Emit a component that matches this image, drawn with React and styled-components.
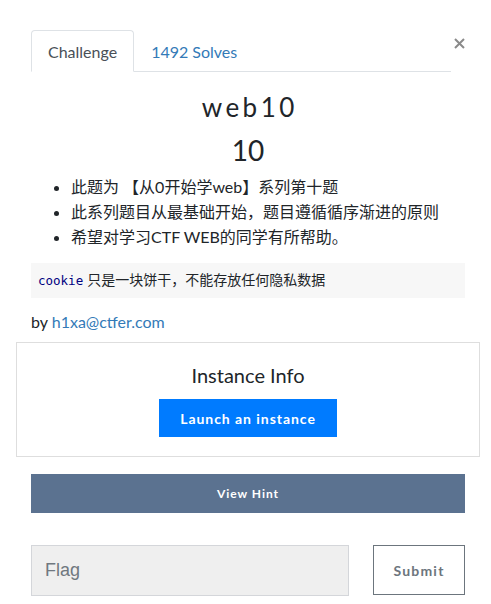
import React from 'react';
import styled, { createGlobalStyle } from 'styled-components';

const GlobalStyle = createGlobalStyle`
  html, body {
    margin: 0;
    padding: 0;
    background: #fff;
  }
  body {
    font-family: Lato, "Noto Sans CJK SC", sans-serif;
    color: #212529;
    font-size: 16px;
  }
  * { box-sizing: border-box; }
`;

const Page = styled.div`
  width: 434px;
  margin-left: 31px;
  padding-top: 30px;
`;

const Header = styled.div`
  display: flex;
  align-items: flex-start;
`;

const Tabs = styled.nav`
  flex: 1;
  display: flex;
  border-bottom: 1px solid #dee2e6;
`;

const Tab = styled.a`
  display: block;
  margin-bottom: -1px;
  padding: 0 16px;
  height: 42px;
  line-height: 42px;
  font-size: 16px;
  text-decoration: none;
  border: 1px solid transparent;
  border-top-left-radius: 4px;
  border-top-right-radius: 4px;
  color: ${(p) => (p.$active ? '#495057' : '#337ab7')};
  background: ${(p) => (p.$active ? '#fff' : 'transparent')};
  border-color: ${(p) => (p.$active ? '#dee2e6 #dee2e6 #fff' : 'transparent')};
`;

const Close = styled.button`
  width: 14px;
  height: 26px;
  padding: 0;
  border: 0;
  background: transparent;
  display: flex;
  align-items: center;
  justify-content: flex-end;
  cursor: pointer;
`;

const Title = styled.h3`
  margin: 17px 0 0;
  text-align: center;
  font-weight: 400;
  font-size: 26px;
  line-height: 36px;
  letter-spacing: 3.5px;
  text-indent: 3.5px;
`;

const Value = styled.h4`
  margin: 7px 0 0;
  text-align: center;
  font-weight: 400;
  font-size: 28px;
  line-height: 36px;
`;

const List = styled.ul`
  margin: 6px 0 14px;
  padding-left: 40px;
  li {
    line-height: 25px;
  }
`;

const CodeBlock = styled.pre`
  margin: 0;
  padding: 8px 7px;
  background: #f7f7f7;
  font-family: Lato, "Noto Sans CJK SC", sans-serif;
  font-size: 14px;
  line-height: 18px;
  code {
    font-family: "DejaVu Sans Mono", monospace;
    font-size: 12.5px;
    color: #000080;
    margin-right: 4px;
  }
`;

const Author = styled.p`
  margin: 12px 0 0;
  line-height: 24px;
  a {
    color: #337ab7;
    text-decoration: none;
  }
`;

const InstanceBox = styled.div`
  margin: 8px -15px 0;
  padding: 20px 0 19px;
  border: 1px solid #dedede;
  display: flex;
  flex-direction: column;
  align-items: center;
`;

const InstanceTitle = styled.h5`
  margin: 0 0 12px;
  font-size: 20px;
  font-weight: 400;
  line-height: 24px;
`;

const PrimaryButton = styled.button`
  width: 178px;
  height: 38px;
  border: 0;
  background: #007bff;
  color: #fff;
  font-family: Lato, sans-serif;
  font-weight: 700;
  font-size: 14px;
  letter-spacing: 0.95px;
`;

const HintButton = styled.button`
  display: block;
  width: 100%;
  height: 39px;
  margin-top: 17px;
  border: 0;
  background: #5b7290;
  color: #fff;
  font-family: Lato, sans-serif;
  font-weight: 700;
  font-size: 12px;
  letter-spacing: 0.95px;
`;

const SubmitRow = styled.form`
  display: flex;
  gap: 24px;
  margin-top: 32px;
`;

const FlagInput = styled.input`
  width: 318px;
  height: 51px;
  padding: 0 13px;
  background: #efefef;
  border: 1px solid #d4d6da;
  font-family: "Liberation Sans", Arial, sans-serif;
  font-size: 18px;
  outline: none;
  &::placeholder {
    color: #707880;
  }
`;

const SubmitButton = styled.button`
  width: 92px;
  height: 50px;
  background: #fff;
  border: 1px solid #6c757d;
  color: #6c757d;
  font-family: Lato, sans-serif;
  font-weight: 700;
  font-size: 14px;
  letter-spacing: 1.2px;
`;

export default function App() {
  return (
    <>
      <GlobalStyle />
      <Page>
        <Header>
          <Tabs>
            <Tab $active href="#">Challenge</Tab>
            <Tab href="#">1492 Solves</Tab>
          </Tabs>
          <Close aria-label="Close">
            <svg width="11" height="11" viewBox="0 0 11 11">
              <path d="M1 1L10 10M10 1L1 10" stroke="#8a8a8a" strokeWidth="2" />
            </svg>
          </Close>
        </Header>
        <Title>web10</Title>
        <Value>10</Value>
        <List>
          <li>此题为 【从0开始学web】系列第十题</li>
          <li>此系列题目从最基础开始，题目遵循循序渐进的原则</li>
          <li>希望对学习CTF WEB的同学有所帮助。</li>
        </List>
        <CodeBlock>
          <code>cookie</code>只是一块饼干，不能存放任何隐私数据
        </CodeBlock>
        <Author>
          by <a href="#">h1xa@ctfer.com</a>
        </Author>
        <InstanceBox>
          <InstanceTitle>Instance Info</InstanceTitle>
          <PrimaryButton type="button">Launch an instance</PrimaryButton>
        </InstanceBox>
        <HintButton type="button">View Hint</HintButton>
        <SubmitRow onSubmit={(e) => e.preventDefault()}>
          <FlagInput placeholder="Flag" />
          <SubmitButton type="submit">Submit</SubmitButton>
        </SubmitRow>
      </Page>
    </>
  );
}
